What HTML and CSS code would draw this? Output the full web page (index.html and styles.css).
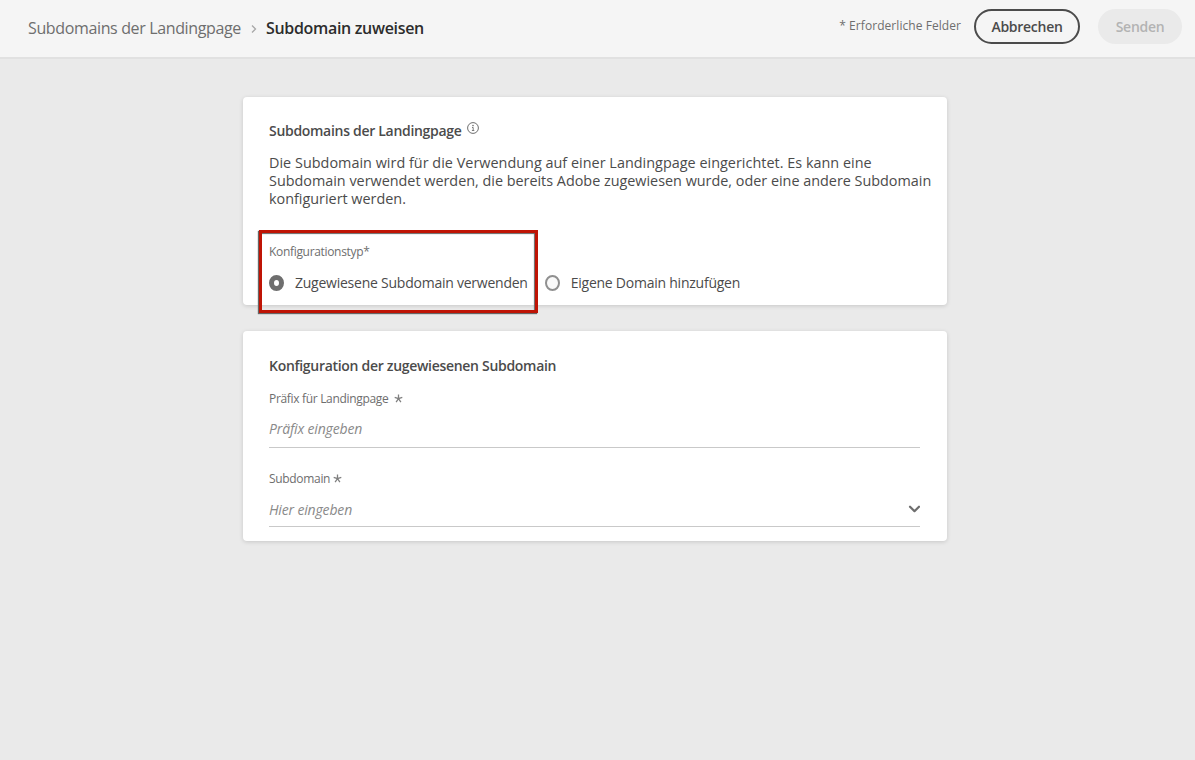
FILE: index.html
```html
<!DOCTYPE html>
<html lang="de">
<head>
<meta charset="utf-8">
<title>Subdomain zuweisen</title>
<link rel="stylesheet" href="styles.css">
</head>
<body>
<header class="header">
  <nav class="breadcrumb">
    <a class="crumb">Subdomains der Landingpage</a>
    <svg class="crumb-arrow" width="6" height="10" viewBox="0 0 6 10"><path d="M1 1.5 4.5 5 1 8.5" fill="none" stroke="#a8a8a8" stroke-width="1.3"/></svg>
    <span class="crumb-current">Subdomain zuweisen</span>
  </nav>
  <div class="actions">
    <span class="required-note">* Erforderliche Felder</span>
    <button class="btn btn-outline">Abbrechen</button>
    <button class="btn btn-disabled" disabled>Senden</button>
  </div>
</header>
<main class="content">
  <section class="card card-type">
    <h2 class="card-title">Subdomains der Landingpage
      <svg class="info" width="12" height="12" viewBox="0 0 12 12"><circle cx="6" cy="6" r="5.4" fill="none" stroke="#6e6e6e" stroke-width="1"/><circle cx="6" cy="3.6" r=".8" fill="#6e6e6e"/><path d="M5 5.5H6.2V8.5M4.9 8.5H7.3" fill="none" stroke="#6e6e6e" stroke-width=".9"/></svg>
    </h2>
    <p class="description"><span class="description-lead">Die Subdomain wird für die Verwendung auf einer Landingpage eingerichtet. Es kann eine</span><br>Subdomain verwendet werden, die bereits Adobe zugewiesen wurde, oder eine andere Subdomain<br>konfiguriert werden.</p>
    <div class="choice">
      <div class="highlight"></div>
      <div class="label">Konfigurationstyp*</div>
      <div class="radios">
        <label class="radio"><span class="dot dot-on"></span><span class="radio-text">Zugewiesene Subdomain verwenden</span></label>
        <label class="radio"><span class="dot"></span><span class="radio-text">Eigene Domain hinzufügen</span></label>
      </div>
    </div>
  </section>
  <section class="card card-config">
    <h2 class="card-title">Konfiguration der zugewiesenen Subdomain</h2>
    <div class="field field-prefix">
      <div class="label label-wide">Präfix für Landingpage
        <svg class="star" width="9" height="9" viewBox="0 0 9 9"><path d="M4.5 4.7V.6M4.5 4.7.7 3.4M4.5 4.7 8.3 3.4M4.5 4.7 2.1 8.1M4.5 4.7 6.9 8.1" stroke="#808080" stroke-width="1.3"/></svg>
      </div>
      <div class="input">Präfix eingeben</div>
    </div>
    <div class="field field-subdomain">
      <div class="label">Subdomain
        <svg class="star" width="9" height="9" viewBox="0 0 9 9"><path d="M4.5 4.7V.6M4.5 4.7.7 3.4M4.5 4.7 8.3 3.4M4.5 4.7 2.1 8.1M4.5 4.7 6.9 8.1" stroke="#808080" stroke-width="1.3"/></svg>
      </div>
      <div class="input">Hier eingeben
        <svg class="chevron" width="12" height="8" viewBox="0 0 12 8"><path d="M2 1.7 6.5 6.2 11 1.7" fill="none" stroke="#6e6e6e" stroke-width="2.2" stroke-linecap="round" stroke-linejoin="round"/></svg>
      </div>
    </div>
  </section>
</main>
</body>
</html>
```

FILE: styles.css
```css
* { box-sizing: border-box; }
body {
  margin: 0;
  min-height: 760px;
  background: #eaeaea;
  font-family: "Open Sans", "Noto Sans", sans-serif;
  font-size: 14px;
  color: #4b4b4b;
}
.header {
  display: flex;
  justify-content: space-between;
  height: 59px;
  padding: 9px 13px 0 28px;
  background: #f5f5f5;
  border-bottom: 2px solid #e1e1e1;
}
.breadcrumb {
  display: flex;
  align-items: center;
  height: 38px;
  font-size: 16px;
}
.crumb { width: 213px; color: #6e6e6e; letter-spacing: -.36px; white-space: nowrap; }
.crumb-arrow { margin: 2px 9px 0 10px; }
.crumb-current { color: #2c2c2c; font-weight: 600; letter-spacing: -.32px; }
.actions { display: flex; align-items: center; height: 35px; }
.required-note { margin: 0 13px 2px 0; font-size: 12px; letter-spacing: .06px; color: #6e6e6e; }
.btn {
  height: 35px;
  padding: 0;
  border: 0;
  border-radius: 18px;
  font: 600 14px "Open Sans", "Noto Sans", sans-serif;
  letter-spacing: -.28px;
}
.btn-outline { width: 106px; border: 2px solid #4b4b4b; background: transparent; color: #4b4b4b; }
.btn-disabled { width: 84px; margin-left: 18px; background: #eaeaea; color: #b3b3b3; }
.content {
  display: flex;
  flex-direction: column;
  gap: 26px;
  width: 704px;
  margin: 38px 0 0 243px;
}
.card {
  padding: 24px 26px 0;
  background: #fff;
  border-radius: 4px;
  box-shadow: 0 1px 4px rgba(0, 0, 0, .15);
}
.card-type { height: 208px; }
.card-config { height: 210px; padding-top: 25px; }
.card-title {
  display: flex;
  gap: 5px;
  margin: 0;
  font-size: 14px;
  font-weight: 600;
  line-height: 20px;
  letter-spacing: -.3px;
}
.info { margin-top: 1px; }
.description {
  margin: 13px 0 0;
  font-size: 14.4px;
  line-height: 18px;
  letter-spacing: -.01px;
  white-space: nowrap;
}
.description-lead { letter-spacing: .02px; }
.choice { position: relative; margin-top: 35px; }
.highlight {
  position: absolute;
  left: -10px;
  top: -13px;
  width: 279px;
  height: 83px;
  border: 3px solid #bf1405;
  box-shadow: -1px 1px 1px #666, inset -1px 1px 1px #666;
}
.label {
  display: flex;
  align-items: center;
  gap: 3px;
  height: 16px;
  font-size: 12px;
  line-height: 16px;
  letter-spacing: -.32px;
  color: #6e6e6e;
}
.choice .label { height: 18px; line-height: 18px; }
.label-wide { gap: 6px; }
.star { margin-bottom: 1px; }
.radios { display: flex; gap: 17px; margin-top: 11px; }
.radio { display: flex; align-items: center; gap: 11px; height: 20px; letter-spacing: -.24px; }
.dot {
  width: 15px;
  height: 16px;
  margin-top: 2px;
  border: 2px solid #909090;
  border-radius: 50%;
  background: #fafafa;
}
.dot-on { border: 5px solid #6e6e6e; background: #fff; }
.field-prefix { margin-top: 15px; }
.field-subdomain { margin-top: 23px; }
.input {
  display: flex;
  align-items: center;
  justify-content: space-between;
  width: 651px;
  height: 41px;
  padding-top: 2px;
  border-bottom: 1px solid #c9c9c9;
  font-style: italic;
  letter-spacing: -.16px;
  color: #8a8a8a;
}
.field-subdomain .input { height: 40px; padding-top: 5px; }
```
